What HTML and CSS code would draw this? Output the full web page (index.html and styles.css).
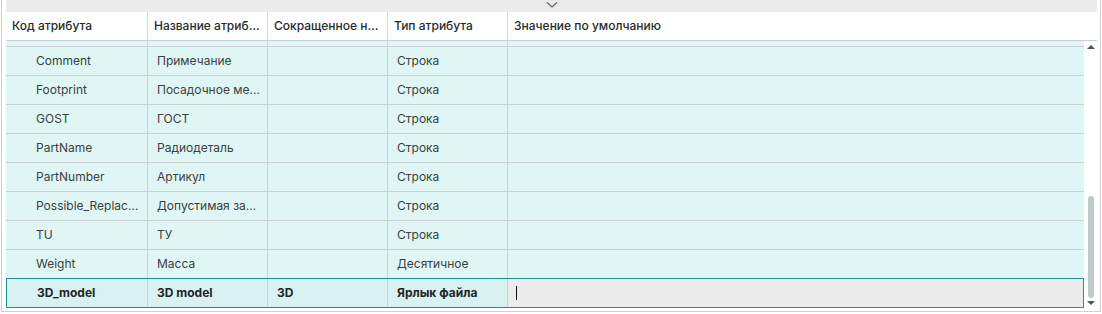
FILE: index.html
```html
<!DOCTYPE html>
<html lang="ru">
<head>
<meta charset="utf-8">
<link rel="stylesheet" href="styles.css">
</head>
<body>
<div class="frame">
  <div class="topbar">
    <svg class="chev" width="12" height="6" viewBox="0 0 12 6"><path d="M1 0.5 L6 5 L11 0.5" fill="none" stroke="#5a5f5f" stroke-width="1.1"/></svg>
  </div>
  <div class="header">
    <div class="hcell c1">Код атрибута</div>
    <div class="hcell c2">Название атрибута</div>
    <div class="hcell c3">Сокращенное наименование</div>
    <div class="hcell c4">Тип атрибута</div>
    <div class="hcell c5 last">Значение по умолчанию</div>
  </div>
  <div class="body">
    <div class="rows">
      <div class="row partial"><div class="cell c1"></div><div class="cell c2"></div><div class="cell c3"></div><div class="cell c4"></div><div class="cell c5"></div></div>
      <div class="row"><div class="cell c1 code">Comment</div><div class="cell c2">Примечание</div><div class="cell c3"></div><div class="cell c4">Строка</div><div class="cell c5"></div></div>
      <div class="row"><div class="cell c1 code">Footprint</div><div class="cell c2">Посадочное место</div><div class="cell c3"></div><div class="cell c4">Строка</div><div class="cell c5"></div></div>
      <div class="row"><div class="cell c1 code">GOST</div><div class="cell c2">ГОСТ</div><div class="cell c3"></div><div class="cell c4">Строка</div><div class="cell c5"></div></div>
      <div class="row"><div class="cell c1 code">PartName</div><div class="cell c2">Радиодеталь</div><div class="cell c3"></div><div class="cell c4">Строка</div><div class="cell c5"></div></div>
      <div class="row"><div class="cell c1 code">PartNumber</div><div class="cell c2">Артикул</div><div class="cell c3"></div><div class="cell c4">Строка</div><div class="cell c5"></div></div>
      <div class="row"><div class="cell c1 code">Possible_Replacement</div><div class="cell c2">Допустимая замена</div><div class="cell c3"></div><div class="cell c4">Строка</div><div class="cell c5"></div></div>
      <div class="row"><div class="cell c1 code">TU</div><div class="cell c2">ТУ</div><div class="cell c3"></div><div class="cell c4">Строка</div><div class="cell c5"></div></div>
      <div class="row nob"><div class="cell c1 code">Weight</div><div class="cell c2">Масса</div><div class="cell c3"></div><div class="cell c4">Десятичное</div><div class="cell c5"></div></div>
      <div class="row selected"><div class="cell c1 code">3D_model</div><div class="cell c2">3D model</div><div class="cell c3">3D</div><div class="cell c4">Ярлык файла</div><div class="cell c5 edit"><span class="caret"></span></div></div>
    </div>
    <div class="scrollbar">
      <div class="arrow up"></div>
      <div class="track"><div class="thumb"></div></div>
      <div class="arrow down"></div>
    </div>
  </div>
</div>
</body>
</html>
```
FILE: styles.css
```css
html, body {
  margin: 0;
  padding: 0;
  background: #ffffff;
}
body {
  font-family: Inter, "Noto Sans", sans-serif;
  font-size: 12px;
  color: #3a3f3f;
}
.frame {
  margin-left: 1px;
  width: 1100px;
  height: 312px;
  box-sizing: border-box;
  border: 1px solid #cdd3d3;
  border-top: none;
  padding: 0 3px 3px 4px;
  display: flex;
  flex-direction: column;
}
.topbar {
  height: 12px;
  background: #ececec;
  display: flex;
  justify-content: center;
  align-items: flex-start;
  padding-top: 2px;
  box-sizing: border-box;
}
.chev { display: block; }
.header {
  height: 29px;
  display: flex;
  border-bottom: 1px solid #c9d2d2;
  background: #fff;
  font-weight: 500;
  color: #262a2a;
}
.hcell {
  box-sizing: border-box;
  padding: 0 3px 0 6px;
  display: block;
  line-height: 28px;
  white-space: nowrap;
  overflow: hidden;
  text-overflow: ellipsis;
  border-right: 1px solid #d3dbdb;
}
.hcell.last { border-right: none; flex: 1; }
.c1 { width: 142px; flex: none; }
.c2 { width: 120px; flex: none; }
.c3 { width: 120px; flex: none; }
.c4 { width: 120px; flex: none; }
.c5 { flex: 1; }
.body {
  flex: 1;
  display: flex;
}
.rows {
  width: 1078px;
  display: flex;
  flex-direction: column;
}
.row {
  display: flex;
  height: 29px;
  box-sizing: border-box;
  background: #e0f6f4;
  border-bottom: 1px solid #c7d1d1;
}
.row.partial { height: 6px; }
.row.nob { border-bottom: none; height: 28px; }
.cell {
  box-sizing: border-box;
  border-right: 1px solid #c9d3d3;
  padding: 0 4px 0 9px;
  line-height: 28px;
  white-space: nowrap;
  overflow: hidden;
  text-overflow: ellipsis;
}
.cell.c5 { border-right: none; }
.cell.code { padding-left: 30px; }
.row.selected {
  height: 30px;
  border: 1px solid #1b958f;
  background: #d9f2f1;
  font-weight: 700;
  color: #222626;
}
.row.selected .c1 { width: 141px; }
.cell.edit {
  background: #ececec;
  display: flex;
  align-items: center;
  padding-left: 8px;
}
.caret {
  width: 1px;
  height: 14px;
  background: #111;
}
.scrollbar {
  width: 12px;
  display: flex;
  flex-direction: column;
  align-items: center;
  background: #fff;
  padding: 4px 0 3px 1px;
  box-sizing: border-box;
}
.arrow {
  width: 0;
  height: 0;
  border-left: 4px solid transparent;
  border-right: 4px solid transparent;
}
.arrow.up { border-bottom: 4px solid #4f5656; }
.arrow.down { border-top: 4px solid #4f5656; }
.track {
  flex: 1;
  display: flex;
  flex-direction: column;
  justify-content: flex-end;
  padding-bottom: 3px;
}
.thumb {
  width: 6px;
  height: 102px;
  border-radius: 3px;
  background: #bfcbcb;
}
```
